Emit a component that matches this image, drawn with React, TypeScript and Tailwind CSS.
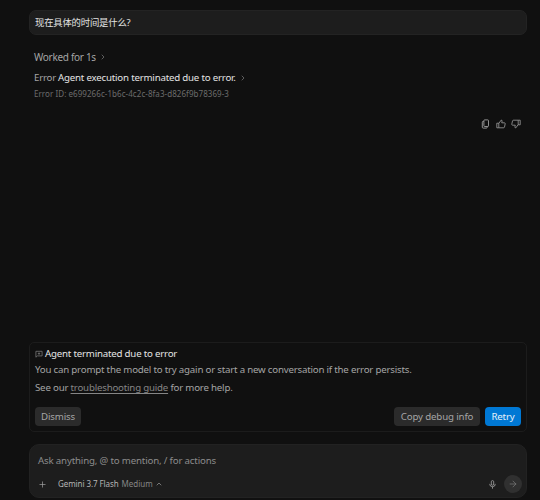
import React from 'react';
import { ChevronRight, ChevronUp, Plus, ArrowRight } from 'lucide-react';

const CopyIcon = () => (
  <svg width="10" height="10" viewBox="0 0 10 10" fill="none" stroke="currentColor" strokeWidth="0.9">
    <rect x="3.9" y="0.9" width="4.6" height="6.6" rx="0.7" />
    <path d="M3.9 2.4H3.1a.8.8 0 0 0-.8.8v5a.9.9 0 0 0 .9.9h3.2a.8.8 0 0 0 .8-.8V7.5" />
  </svg>
);

const ThumbIcon = ({ className = '' }: { className?: string }) => (
  <svg
    width="10"
    height="10"
    viewBox="0 0 10 10"
    fill="none"
    stroke="currentColor"
    strokeWidth="0.8"
    strokeLinejoin="round"
    className={className}
  >
    <path d="M.8 4.2h2v4.6h-2z" />
    <path d="M2.8 4.4 5.2 1.1q1-.1.9 1L5.7 3.8h2.7q.9 0 .8 1L8.5 8q-.2.8-1 .8H2.8" />
  </svg>
);

const MicIcon = () => (
  <svg width="9" height="9" viewBox="0 0 9 9" fill="none" stroke="currentColor" strokeWidth="0.8">
    <rect x="3.3" y="0.6" width="2.4" height="4.6" rx="1.2" />
    <path d="M1.7 3.9a2.8 2.8 0 0 0 5.6 0M4.5 6.7v2" />
  </svg>
);

const FeedbackIcon = () => (
  <svg width="8" height="8" viewBox="0 0 8 8" fill="none" stroke="currentColor" strokeWidth="0.8">
    <path d="M.9 7.2V1.3h6.2v4.6H2.4z" />
    <path d="M4 2.4v2.4M2.8 3.6h2.4" />
  </svg>
);

const UserMessage = () => (
  <div className="flex h-[25px] items-center rounded-[7px] border border-[#232323] bg-[#1d1d1d] px-[5px] pt-[2px] text-[9.4px] tracking-[-0.22px] text-[#e2e2e2]">
    现在具体的时间是什么?
  </div>
);

const AgentResponse = () => (
  <div className="pl-[5px]">
    <div className="mt-[14px] flex h-4 items-center text-[10px] tracking-[-0.3px] text-[#a5a5a5]">
      Worked for 1s
      <ChevronRight size={8} className="ml-[3px] text-[#858585]" />
    </div>
    <div className="mt-[5px] flex h-4 items-center text-[9.7px] tracking-[-0.2px]">
      <span className="text-[#a5a5a5]">Error</span>
      <span className="ml-[2px] text-[#e4e4e4]">Agent execution terminated due to error.</span>
      <ChevronRight size={8} className="ml-[3px] text-[#858585]" />
    </div>
    <div className="flex h-4 items-center text-[8px] tracking-[0.06px] text-[#6c6c6c]">
      Error ID: e699266c-1b6c-4c2c-8fa3-d826f9b78369-3
    </div>
    <div className="mt-[16px] flex h-3 items-center justify-end gap-[5.5px] pr-[6px] text-[#a0a0a0]">
      <CopyIcon />
      <ThumbIcon />
      <ThumbIcon className="rotate-180" />
    </div>
  </div>
);

const ErrorCard = () => (
  <div className="flex h-[90px] flex-col rounded-[5px] border border-[#1c1c1c] px-[5px] pt-[3px] text-[9.7px] tracking-[-0.2px] text-[#a5a5a5]">
    <div className="flex h-4 items-center gap-[2px]">
      <span className="text-[#777777]"><FeedbackIcon /></span>
      <span className="pt-px text-[#e4e4e4]">Agent terminated due to error</span>
    </div>
    <p className="h-4 leading-4">
      You can prompt the model to try again or start a new conversation if the error persists.
    </p>
    <p className="mt-[2px] h-4 leading-4">
      See our <a className="text-[#858585] underline underline-offset-2">troubleshooting guide</a> for more help.
    </p>
    <div className="mt-[11px] flex h-[19px] items-stretch tracking-[-0.14px]">
      <button className="w-[46px] rounded-[4px] bg-[#2b2b2b] leading-none">Dismiss</button>
      <button className="ml-auto w-[86px] rounded-[4px] bg-[#2b2b2b] leading-none">Copy debug info</button>
      <button className="ml-[5px] w-[36px] rounded-[4px] bg-[#0078d4] leading-none text-[#e6f1fa]">Retry</button>
    </div>
  </div>
);

const Composer = () => (
  <div className="mt-[12px] h-[54px] rounded-[10px] border border-[#222222] bg-[#1d1d1d] pt-[8px] pr-[4px] pl-[8px]">
    <div className="h-4 text-[9.7px] leading-4 tracking-[-0.17px] text-[#8c8c8c]">
      Ask anything, @ to mention, / for actions
    </div>
    <div className="mt-[6px] flex h-[18px] items-center text-[8px]">
      <Plus size={9} strokeWidth={1.8} className="text-[#a5a5a5]" />
      <span className="ml-[11px] tracking-[-0.08px] text-[#b4b4b4]">Gemini 3.7 Flash</span>
      <span className="ml-[3px] text-[#858585]">Medium</span>
      <ChevronUp size={8} className="ml-[2px] text-[#a5a5a5]" />
      <span className="ml-auto text-[#a5a5a5]"><MicIcon /></span>
      <div className="ml-[7px] flex size-[18px] items-center justify-center rounded-full bg-[#303030]">
        <ArrowRight size={10} strokeWidth={1.6} className="text-[#808080]" />
      </div>
    </div>
  </div>
);

const App = () => {
  return (
    <div className="flex h-[500px] w-[540px] flex-col bg-[#101010] pt-[10px] pr-[13px] pb-[2px] pl-[29px] font-['Noto_Sans','Noto_Sans_CJK_SC',sans-serif]">
      <UserMessage />
      <AgentResponse />
      <div className="flex-1" />
      <ErrorCard />
      <Composer />
    </div>
  );
};

export default App;
